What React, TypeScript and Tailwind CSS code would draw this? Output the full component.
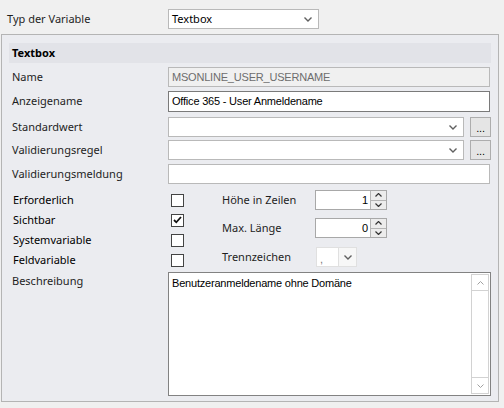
import React from "react";

const sans = "font-['Segoe_UI','Noto_Sans',sans-serif]";
const ms = "font-['Liberation_Sans',Arial,sans-serif] text-[11px] tracking-[-0.2px]";

function Chevron({ className = "" }: { className?: string }) {
  return (
    <svg width="8" height="5" viewBox="0 0 8 5" className={className}>
      <path d="M0.5 0.5 L4 4 L7.5 0.5" fill="none" stroke="#606060" strokeWidth="1.4" />
    </svg>
  );
}

function Combo({ value = "", className = "" }: { value?: string; className?: string }) {
  return (
    <div className={`flex items-center h-[20px] bg-white border border-[#b9b9b9] ${className}`}>
      <span className={`flex-1 pl-[3px] ${sans} text-[11px] text-black`}>{value}</span>
      <Chevron className="mr-[6px]" />
    </div>
  );
}

function DotsButton() {
  return (
    <div className={`w-[21px] h-[20px] ml-[6px] bg-[#e5e5e5] border border-[#adadad] flex items-end justify-center pb-[2px] ${ms} leading-none text-black`}>
      ...
    </div>
  );
}

function CheckBox({ checked = false }: { checked?: boolean }) {
  return (
    <div className="w-[13px] h-[13px] ml-[3px] border border-[#444] bg-white flex items-center justify-center">
      {checked && (
        <svg width="9" height="8" viewBox="0 0 9 8">
          <path d="M1 4 L3.3 6.3 L8 1" fill="none" stroke="#111" strokeWidth="1.8" />
        </svg>
      )}
    </div>
  );
}

function Spin({ value }: { value: string }) {
  return (
    <div className="flex w-[72px] h-[20px] bg-white border border-[#a8a8a8]">
      <span className={`flex-1 text-right pr-[2px] ${ms} leading-[18px] text-black`}>{value}</span>
      <div className="w-[16px] flex flex-col">
        <div className="flex-1 bg-[#ececec] border-l border-b border-[#b4b4b4] flex items-center justify-center">
          <svg width="7" height="4" viewBox="0 0 7 4">
            <path d="M0.5 3.5 L3.5 0.5 L6.5 3.5" fill="none" stroke="#333" strokeWidth="1.2" />
          </svg>
        </div>
        <div className="flex-1 bg-[#ececec] border-l border-[#b4b4b4] flex items-center justify-center">
          <svg width="7" height="4" viewBox="0 0 7 4">
            <path d="M0.5 0.5 L3.5 3.5 L6.5 0.5" fill="none" stroke="#333" strokeWidth="1.2" />
          </svg>
        </div>
      </div>
    </div>
  );
}

function Label({ children }: { children: React.ReactNode }) {
  return <span className="w-[159px] pl-[3px] shrink-0">{children}</span>;
}

export default function App() {
  return (
    <div className={`w-[504px] h-[408px] bg-[#f0f0f0] overflow-hidden ${sans} text-[11px] text-[#1e1e1e]`}>
      <div className="flex items-center h-[20px] mt-[9px]">
        <span className="w-[168px] pl-[7px] shrink-0">Typ der Variable</span>
        <Combo value="Textbox" className="w-[151px]" />
      </div>

      <div className="ml-[1px] mt-[5px] w-[498px] h-[368px] border border-[#b4b4b4] bg-[#ebecf0] px-[7px] pt-[8px]">
        <div className="h-[20px] w-[482px] bg-[#e2e3e8] pl-[3px] font-bold text-black flex items-center">Textbox</div>

        <div className="flex items-center mt-[4px] h-[20px]">
          <Label>Name</Label>
          <div className={`w-[322px] h-[20px] bg-[#f0f0f0] border border-[#b9b9b9] pl-[3px] ${ms} leading-[18px] text-[#6d6d6d]`}>
            MSONLINE_USER_USERNAME
          </div>
        </div>

        <div className="flex items-center mt-[4px] h-[21px]">
          <Label>Anzeigename</Label>
          <div className={`w-[322px] h-[21px] bg-white border border-[#7a7a7a] pl-[3px] ${ms} leading-[19px] text-black`}>
            Office 365 - User Anmeldename
          </div>
        </div>

        <div className="flex items-center mt-[5px] h-[20px]">
          <Label>Standardwert</Label>
          <Combo className="w-[298px]" />
          <DotsButton />
        </div>

        <div className="flex items-center mt-[3px] h-[20px]">
          <Label>Validierungsregel</Label>
          <Combo className="w-[298px]" />
          <DotsButton />
        </div>

        <div className="flex items-center mt-[4px] h-[20px]">
          <Label>Validierungsmeldung</Label>
          <div className="w-[322px] h-[20px] bg-white border border-[#b9b9b9]" />
        </div>

        <div className="flex mt-[6px]">
          <div className="flex flex-col w-[213px]">
            {[
              ["Erforderlich", false],
              ["Sichtbar", true],
              ["Systemvariable", false],
              ["Feldvariable", false],
            ].map(([t, c]) => (
              <div key={t as string} className="flex items-center h-[20px]">
                <span className="w-[159px] pl-[4px] shrink-0 text-black">{t as string}</span>
                <CheckBox checked={c as boolean} />
              </div>
            ))}
          </div>
          <div className="flex flex-col">
            <div className="flex items-center h-[20px]">
              <span className="w-[93px]">Höhe in Zeilen</span>
              <Spin value="1" />
            </div>
            <div className="flex items-center h-[20px] mt-[8px]">
              <span className="w-[93px]">Max. Länge</span>
              <Spin value="0" />
            </div>
            <div className="flex items-center h-[20px] mt-[9px]">
              <span className="w-[94px]">Trennzeichen</span>
              <div className="flex w-[41px] h-[20px] border border-[#e0e0e0] bg-[#f7f7f7]">
                <div className={`w-[22px] bg-white border-r border-[#e0e0e0] pl-[3px] ${ms} leading-[22px] text-[#777]`}>,</div>
                <div className="flex-1 flex items-center justify-center">
                  <Chevron />
                </div>
              </div>
            </div>
          </div>
        </div>

        <div className="flex items-start mt-[2px]">
          <span className="w-[159px] pl-[3px] shrink-0 pt-[1px]">Beschreibung</span>
          <div className="flex w-[323px] h-[124px] bg-white border border-[#828282]">
            <div className={`flex-1 pl-[3px] pt-[2px] ${ms} text-black`}>Benutzeranmeldename ohne Domäne</div>
            <div className="w-[18px] m-[1px] flex flex-col justify-between border border-[#d2d2d2]">
              <div className="h-[16px] border-b border-[#d2d2d2] flex items-center justify-center">
                <svg width="7" height="4" viewBox="0 0 7 4">
                  <path d="M0.5 3.5 L3.5 0.5 L6.5 3.5" fill="none" stroke="#a0a0a0" strokeWidth="1" />
                </svg>
              </div>
              <div className="h-[16px] border-t border-[#d2d2d2] flex items-center justify-center">
                <svg width="7" height="4" viewBox="0 0 7 4">
                  <path d="M0.5 0.5 L3.5 3.5 L6.5 0.5" fill="none" stroke="#a0a0a0" strokeWidth="1" />
                </svg>
              </div>
            </div>
          </div>
        </div>
      </div>
    </div>
  );
}
